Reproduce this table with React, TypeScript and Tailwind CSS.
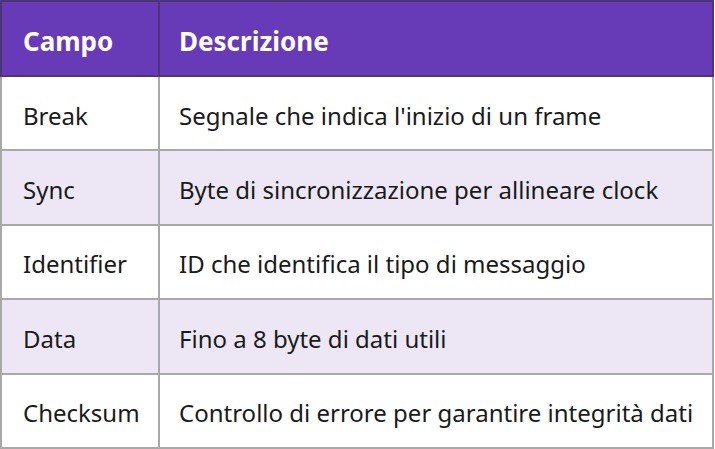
const rows = [
  { campo: "Break", desc: "Segnale che indica l'inizio di un frame" },
  { campo: "Sync", desc: "Byte di sincronizzazione per allineare clock" },
  { campo: "Identifier", desc: "ID che identifica il tipo di messaggio" },
  { campo: "Data", desc: "Fino a 8 byte di dati utili" },
  { campo: "Checksum", desc: "Controllo di errore per garantire integrità dati" },
];

const App = () => {
  return (
    <div className="w-[715px] h-[449px] bg-white font-['Noto_Sans',sans-serif] text-[#1a1a1a]">
      <table className="w-[714px] border-collapse table-fixed">
        <colgroup>
          <col className="w-[158px]" />
          <col />
        </colgroup>
        <thead>
          <tr className="h-[75px] bg-[#673ab7] text-white text-[26px] font-bold text-left">
            <th className="border-2 border-[#4b3575] pl-[21px] pt-[5px]">Campo</th>
            <th className="border-2 border-[#4b3575] pl-[19px] pt-[5px]">Descrizione</th>
          </tr>
        </thead>
        <tbody>
          {rows.map((r, i) => (
            <tr
              key={r.campo}
              className={`h-[74.4px] text-[24px] ${i % 2 == 1 ? "bg-[#ede7f5]" : "bg-white"}`}
            >
              <td className="border-2 border-[#a8a8a8] pl-[21px] pt-[5px]">{r.campo}</td>
              <td className="border-2 border-[#a8a8a8] pl-[19px] pt-[5px] whitespace-nowrap">{r.desc}</td>
            </tr>
          ))}
        </tbody>
      </table>
    </div>
  );
};

export default App;
